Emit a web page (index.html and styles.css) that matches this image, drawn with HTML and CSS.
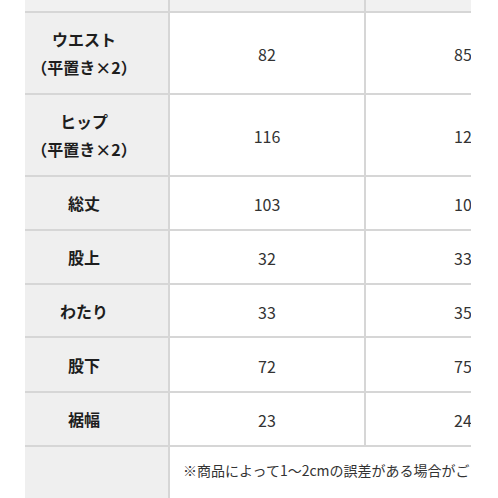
FILE: index.html
```html
<!DOCTYPE html>
<html lang="ja">
<head>
<meta charset="utf-8">
<link rel="stylesheet" href="styles.css">
</head>
<body>
<div class="wrap">
  <div class="sheet">
    <div class="row head">
      <div class="cell label"></div>
      <div class="cell val"></div>
      <div class="cell val last"></div>
    </div>
    <div class="row tall">
      <div class="cell label">ウエスト<br>（平置き×2）</div>
      <div class="cell val">82</div>
      <div class="cell val last">85</div>
    </div>
    <div class="row tall">
      <div class="cell label">ヒップ<br>（平置き×2）</div>
      <div class="cell val">116</div>
      <div class="cell val last">121</div>
    </div>
    <div class="row r54">
      <div class="cell label">総丈</div>
      <div class="cell val">103</div>
      <div class="cell val last">106</div>
    </div>
    <div class="row r54">
      <div class="cell label">股上</div>
      <div class="cell val">32</div>
      <div class="cell val last">33</div>
    </div>
    <div class="row r53">
      <div class="cell label">わたり</div>
      <div class="cell val">33</div>
      <div class="cell val last">35</div>
    </div>
    <div class="row r55">
      <div class="cell label">股下</div>
      <div class="cell val">72</div>
      <div class="cell val last">75</div>
    </div>
    <div class="row r54">
      <div class="cell label">裾幅</div>
      <div class="cell val">23</div>
      <div class="cell val last">24.5</div>
    </div>
    <div class="row note-row">
      <div class="cell label blank"></div>
      <div class="cell note">※商品によって1〜2cmの誤差がある場合がございます。</div>
    </div>
  </div>
</div>
</body>
</html>
```
FILE: styles.css
```css
html, body {
  margin: 0;
  padding: 0;
  background: #ffffff;
}
body {
  font-family: "Noto Sans CJK JP", "Noto Sans", sans-serif;
  width: 498px;
  height: 498px;
  overflow: hidden;
}
.wrap {
  padding-left: 25px;
  width: 446px;
  overflow: hidden;
}
.sheet {
  width: 600px;
}
.row {
  display: grid;
  grid-template-columns: 145px 196px 259px;
  border-bottom: 2px solid #d6d6d6;
  box-sizing: border-box;
}
.row.head { height: 13px; background: #f1f1f1; }
.row.head .cell { background: #f1f1f1; }
.row.tall { height: 82px; }
.row.r54 { height: 54px; }
.row.r53 { height: 53px; }
.row.r55 { height: 55px; }
.row.note-row {
  height: 60px;
  border-bottom: none;
  grid-template-columns: 145px 455px;
}
.cell {
  display: flex;
  align-items: center;
  justify-content: center;
  box-sizing: border-box;
}
.label {
  background: #efefef;
  border-right: 2px solid #d6d6d6;
  padding-right: 25px;
  font-weight: 700;
  font-size: 16px;
  line-height: 28px;
  color: #1e1e1e;
  text-align: center;
  flex-direction: column;
}
.val {
  border-right: 2px solid #d6d6d6;
  font-size: 16px;
  color: #333333;
  padding-top: 2px;
}
.val.last {
  border-right: none;
  justify-content: flex-start;
  padding-left: 88px;
}
.note {
  justify-content: flex-start;
  align-items: flex-start;
  padding: 13px 0 0 13px;
  font-size: 14px;
  line-height: 20px;
  color: #333333;
  white-space: nowrap;
}
```
